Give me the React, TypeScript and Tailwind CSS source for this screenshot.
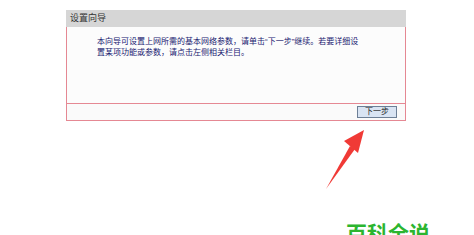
import React from "react";

export default function App() {
  return (
    <div
      className="relative w-[474px] h-[235px] overflow-hidden bg-white"
      style={{ fontFamily: '"Liberation Sans", "Noto Sans CJK SC", sans-serif' }}
    >
      <div className="pt-[10px] pl-[66px]">
        <div className="w-[340px]">
          <div className="h-[17px] bg-[#d6d6d6] pl-[4px] text-[9px] leading-[17px] text-[#333]">
            设置向导
          </div>
          <div className="h-[76px] border-x border-[#e58893] bg-[#fcfcfc] pl-[30px] pt-[9px] text-[8px] leading-[11px] text-[#202070]">
            <p>本向导可设置上网所需的基本网络参数，请单击“下一步”继续。若要详细设</p>
            <p>置某项功能或参数，请点击左侧相关栏目。</p>
          </div>
          <div className="flex h-[18px] items-center justify-end border border-[#e58893] bg-[#fafafa] pr-[8px]">
            <div className="flex h-[12px] w-[40px] items-center justify-center border border-[#6d7f96] bg-[#d9e4f3] text-[8px] leading-none text-[#222]">
              下一步
            </div>
          </div>
        </div>
      </div>
      <svg
        className="absolute left-0 top-0"
        width="474"
        height="235"
        viewBox="0 0 474 235"
      >
        <path d="M326 189 L350 146 L355 149 Z" fill="#f03a36" />
        <path d="M364 130 L344 141 L358 153 Z" fill="#f03a36" />
      </svg>
      <div className="absolute left-[346px] top-[221px] text-[21px] font-bold leading-[26px] text-[#2cb530]">
        百科全说
      </div>
    </div>
  );
}
